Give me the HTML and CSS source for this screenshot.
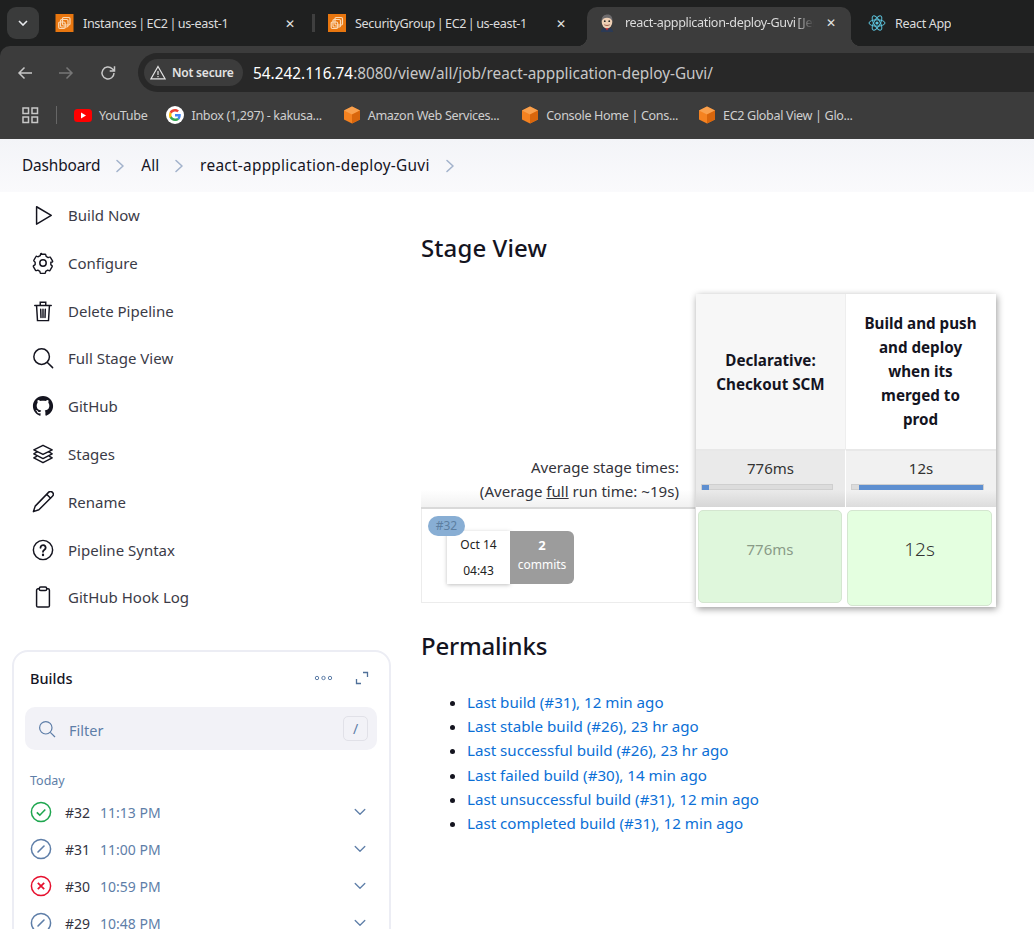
FILE: index.html
```html
<!DOCTYPE html>
<html lang="en">
<head>
  <meta charset="UTF-8">
  <title>react-appplication-deploy-Guvi [Jenkins]</title>
  <link rel="stylesheet" href="styles.css">
</head>
<body>
  <svg class="defs" width="0" height="0">
    <symbol id="ec2" viewBox="0 0 18 18">
      <rect width="18" height="18" fill="#e8760f"/>
      <g fill="none" stroke="#fbd9b4" stroke-width="1.2">
        <rect x="7" y="3.5" width="7.5" height="7.5" rx="1.2"/>
        <rect x="5" y="5.5" width="7.5" height="7.5" rx="1.2"/>
        <rect x="3.2" y="8" width="6.5" height="6.5" rx="1.2"/>
      </g>
    </symbol>
    <symbol id="cube" viewBox="0 0 18 18">
      <path d="M9 0.5 17 4.5V13.5L9 17.5 1 13.5V4.5Z" fill="#f58220"/>
      <path d="M9 0.5 17 4.5 9 8.5 1 4.5Z" fill="#f9a04d"/>
      <path d="M9 8.5 17 4.5V13.5L9 17.5Z" fill="#d9660c"/>
    </symbol>
    <symbol id="chev" viewBox="0 0 10 14">
      <path d="M2 1.5 8 7 2 12.5" fill="none" stroke="#a3b3cc" stroke-width="1.6" stroke-linecap="round" stroke-linejoin="round"/>
    </symbol>
    <symbol id="down" viewBox="0 0 12 8">
      <path d="M1.2 1.5 6 6.2 10.8 1.5" fill="none" stroke="#5e7ea8" stroke-width="1.3" stroke-linecap="round" stroke-linejoin="round"/>
    </symbol>
    <symbol id="aborted" viewBox="0 0 22 22">
      <circle cx="11" cy="11" r="9.6" fill="none" stroke="#5e7ea8" stroke-width="1.5"/>
      <path d="M8 14 14 8" fill="none" stroke="#5e7ea8" stroke-width="1.6" stroke-linecap="round"/>
    </symbol>
  </svg>

  <div class="tabstrip">
    <div class="tab-search">
      <svg width="10" height="6" viewBox="0 0 10 6"><path d="M1 1 5 5 9 1" fill="none" stroke="#e8eaed" stroke-width="1.6"/></svg>
    </div>
    <div class="tab tab-first">
      <svg class="favicon" width="19" height="18"><use href="#ec2"/></svg>
      <span class="tab-title">Instances | EC2 | us-east-1</span>
      <span class="tab-close">✕</span>
    </div>
    <i class="tab-sep"></i>
    <div class="tab tab-second">
      <svg class="favicon" width="18" height="18"><use href="#ec2"/></svg>
      <span class="tab-title">SecurityGroup | EC2 | us-east-1</span>
      <span class="tab-close">✕</span>
    </div>
    <div class="tab tab-active">
      <svg class="favicon" width="16" height="18" viewBox="0 0 18 20">
        <path d="M2 20c1-4 3-5 7-5s6 1 7 5Z" fill="#2b3a55"/>
        <path d="M7 15.500h4l-2 3Z" fill="#c2272d"/>
        <ellipse cx="9" cy="8.500" rx="6" ry="7.500" fill="#eecfb4"/>
        <path d="M3 8C2.500 2 7 .5 10 .5S15.500 3 15 8C14 5 12 4 9 4S4 5 3 8Z" fill="#6d6b6d"/>
        <circle cx="6.500" cy="8" r="1" fill="#222"/>
        <circle cx="11.500" cy="8" r="1" fill="#222"/>
        <path d="M6 12c2 1 4 1 6 0" stroke="#8c4a3a" fill="none"/>
      </svg>
      <span class="tab-title tab-fade">react-appplication-deploy-Guvi [Jenkins]</span>
      <span class="tab-close">✕</span>
    </div>
    <div class="tab tab-last">
      <svg class="favicon" width="18" height="18" viewBox="0 0 18 18">
        <g fill="none" stroke="#5cc4dd" stroke-width="1">
          <ellipse cx="9" cy="9" rx="8" ry="3.200"/>
          <ellipse cx="9" cy="9" rx="8" ry="3.200" transform="rotate(60 9 9)"/>
          <ellipse cx="9" cy="9" rx="8" ry="3.200" transform="rotate(120 9 9)"/>
        </g>
        <circle cx="9" cy="9" r="1.600" fill="#5cc4dd"/>
      </svg>
      <span class="tab-title">React App</span>
    </div>
  </div>

  <div class="toolbar">
    <svg class="nav-back" width="16" height="14" viewBox="0 0 16 14"><path d="M15 7H2M7.500 1.500 2 7l5.500 5.500" fill="none" stroke="#c7c7c7" stroke-width="1.500"/></svg>
    <svg class="nav-forward" width="16" height="14" viewBox="0 0 16 14"><path d="M1 7h13M8.500 1.500 14 7l-5.500 5.500" fill="none" stroke="#777" stroke-width="1.500"/></svg>
    <svg class="nav-reload" width="16" height="16" viewBox="0 0 16 16"><path d="M14 8a6 6 0 1 1-1.800-4.300L14.300 5.800M14.500 1.200V6H9.700" fill="none" stroke="#c7c7c7" stroke-width="1.500"/></svg>
    <div class="omnibox">
      <div class="chip">
        <svg width="16" height="15" viewBox="0 0 16 15"><path d="M8 1.500 15 13.800H1ZM8 6v4M8 11v1.200" fill="none" stroke="#e3e3e3" stroke-width="1.200"/></svg>
        <span>Not secure</span>
      </div>
      <span class="url"><b>54.242.116.74</b>:8080/view/all/job/react-appplication-deploy-Guvi/</span>
    </div>
  </div>

  <div class="bookmarks">
    <svg class="apps" width="17" height="17" viewBox="0 0 17 17"><g fill="none" stroke="#c7c7c7" stroke-width="1.500"><rect x="1" y="1" width="5.500" height="5.500"/><rect x="10" y="1" width="5.500" height="5.500"/><rect x="1" y="10" width="5.500" height="5.500"/><rect x="10" y="10" width="5.500" height="5.500"/></g></svg>
    <i class="bm-sep"></i>
    <div class="bm bm-yt">
      <svg width="18" height="13" viewBox="0 0 18 13"><rect width="18" height="13" rx="3.500" fill="#f00"/><path d="M7 3.500 12 6.500 7 9.500Z" fill="#fff"/></svg>
      <span>YouTube</span>
    </div>
    <div class="bm bm-inbox">
      <svg width="18" height="18" viewBox="0 0 18 18">
        <circle cx="9" cy="9" r="9" fill="#fff"/>
        <path d="M14.800 9.200c0-.5 0-.9-.1-1.300H9v2.500h3.300c-.2.800-.6 1.400-1.200 1.800l1.900 1.500c1.100-1 1.800-2.600 1.800-4.500Z" fill="#4285f4"/>
        <path d="M9 15c1.600 0 3-.5 4-1.500l-1.900-1.500c-.5.400-1.200.6-2.100.6-1.600 0-2.900-1-3.400-2.500l-2 1.500C4.600 13.700 6.600 15 9 15Z" fill="#34a853"/>
        <path d="M5.600 10.600c-.3-1-.3-2.100 0-3.100l-2-1.500c-.8 1.600-.8 4.500 0 6.100Z" fill="#fbbc05"/>
        <path d="M9 5.400c.9 0 1.700.3 2.300.9l1.700-1.700C12 3.600 10.600 3 9 3 6.600 3 4.600 4.300 3.600 6l2 1.500C6.100 6.400 7.400 5.400 9 5.400Z" fill="#ea4335"/>
      </svg>
      <span>Inbox (1,297) - kakusa...</span>
    </div>
    <div class="bm bm-aws">
      <svg width="18" height="18"><use href="#cube"/></svg>
      <span>Amazon Web Services...</span>
    </div>
    <div class="bm bm-console">
      <svg width="18" height="18"><use href="#cube"/></svg>
      <span>Console Home | Cons...</span>
    </div>
    <div class="bm">
      <svg width="18" height="18"><use href="#cube"/></svg>
      <span>EC2 Global View | Glo...</span>
    </div>
  </div>

  <div class="breadcrumbs">
    <span class="crumb crumb-home">Dashboard</span>
    <svg class="crumb-chev" width="10" height="14"><use href="#chev"/></svg>
    <span class="crumb">All</span>
    <svg class="crumb-chev" width="10" height="14"><use href="#chev"/></svg>
    <span class="crumb crumb-job">react-appplication-deploy-Guvi</span>
    <svg class="crumb-chev" width="10" height="14"><use href="#chev"/></svg>
  </div>

  <div class="page">
    <aside class="sidebar">
      <ul class="tasks">
        <li>
          <svg viewBox="0 0 24 24"><path d="M5 3 21 12.500 5 22Z" stroke-linejoin="round"/></svg>
          <span>Build Now</span>
        </li>
        <li>
          <svg viewBox="0 0 24 24"><circle cx="12" cy="12" r="3.500"/><path d="M9.800 2h4.400c.6 0 1 .4 1.100.9l.3 1.600 2.300 1.300 1.500-.5c.5-.2 1.100 0 1.300.5l2.200 3.800c.3.500.2 1-.2 1.400L21 11.100v2.800l1.200 1.100c.4.400.5.900.2 1.400l-2.200 3.800c-.2.500-.8.700-1.300.5l-1.500-.5-2.300 1.300-.3 1.600c-.1.500-.5.900-1.100.9H9.800c-.6 0-1-.4-1.100-.9l-.3-1.600-2.300-1.300-1.500.5c-.5.200-1.100 0-1.300-.5l-2.200-3.800c-.3-.5-.2-1 .2-1.400L3 13.900v-2.800L1.800 10c-.4-.4-.5-.9-.2-1.400l2.200-3.800c.2-.5.800-.7 1.300-.5l1.500.5 2.300-1.300.3-1.600c.1-.5.500-.9 1.100-.9Z" transform="translate(.6 .6) scale(.95)" stroke-linejoin="round"/></svg>
          <span>Configure</span>
        </li>
        <li>
          <svg viewBox="0 0 24 24"><path d="M5 6.500 6 22.500h12l1-16M3 6h18M9 6V2.500h6V6M9.500 10l.3 9M14.500 10l-.3 9M12 10v9"/></svg>
          <span>Delete Pipeline</span>
        </li>
        <li>
          <svg viewBox="0 0 24 24"><circle cx="10.500" cy="10.500" r="8.500"/><path d="M16.800 16.800 22.500 22.500"/></svg>
          <span>Full Stage View</span>
        </li>
        <li>
          <svg viewBox="0 0 24 24"><path class="solid" d="M12 1C5.900 1 1 5.900 1 12.100c0 4.900 3.200 9 7.500 10.500.5.100.8-.2.800-.6v-2c-3.100.7-3.700-1.400-3.700-1.400-.5-1.300-1.200-1.600-1.200-1.600-1-.7.100-.7.100-.7 1.100.1 1.700 1.100 1.700 1.100 1 1.700 2.600 1.200 3.200.9.100-.7.400-1.200.7-1.500-2.400-.3-5-1.200-5-5.400 0-1.200.4-2.200 1.100-3-.1-.3-.5-1.400.1-2.900 0 0 .9-.3 3 1.100.9-.2 1.800-.4 2.700-.4s1.900.1 2.700.4c2.100-1.400 3-1.100 3-1.100.6 1.500.2 2.600.1 2.900.7.800 1.100 1.800 1.100 3 0 4.200-2.600 5.100-5 5.400.4.300.7 1 .7 2v3.100c0 .3.200.7.800.6C19.800 21.100 23 17 23 12.100 23 5.900 18.100 1 12 1Z"/></svg>
          <span>GitHub</span>
        </li>
        <li>
          <svg viewBox="0 0 24 24"><path d="M12 2.500 22 7.500 12 12.500 2 7.500ZM5 10 2 11.800 12 17 22 11.800 19 10M5 14.500 2 16.300 12 21.500 22 16.300 19 14.500" stroke-linejoin="round"/></svg>
          <span>Stages</span>
        </li>
        <li>
          <svg viewBox="0 0 24 24"><path d="M18 1.500a3 3 0 0 1 4.300 4.300L7.500 20.500 1.500 22.500l2-6ZM16 3.500l4.300 4.300" stroke-linejoin="round"/></svg>
          <span>Rename</span>
        </li>
        <li>
          <svg viewBox="0 0 24 24"><circle cx="12" cy="12" r="10.500"/><path d="M9.300 9.500a2.800 2.800 0 1 1 4.300 2.300c-.9.600-1.600 1.100-1.600 2.200" stroke-width="2"/><path d="M12 17v.6" stroke-width="2.400"/></svg>
          <span>Pipeline Syntax</span>
        </li>
        <li>
          <svg viewBox="0 0 24 24"><path d="M8 3H6.500A1.500 1.500 0 0 0 5 4.500v17A1.500 1.500 0 0 0 6.500 23h11a1.500 1.500 0 0 0 1.500-1.500v-17A1.500 1.500 0 0 0 17.500 3H16"/><rect x="8" y="1" width="8" height="4" rx="1.500"/></svg>
          <span>GitHub Hook Log</span>
        </li>
      </ul>

      <section class="builds">
        <div class="builds-head">
          <h2>Builds</h2>
          <svg class="dots" width="19" height="6" viewBox="0 0 19 6"><g fill="none" stroke="#5e7ea8" stroke-width="1"><circle cx="3" cy="3" r="1.700"/><circle cx="9.500" cy="3" r="1.700"/><circle cx="16" cy="3" r="1.700"/></g></svg>
          <svg class="expand" width="14" height="14" viewBox="0 0 14 14"><path d="M8 1.500h4.500V6M6 12.500H1.500V8" fill="none" stroke="#4f7099" stroke-width="1.300"/></svg>
        </div>
        <div class="filter">
          <svg width="18" height="18" viewBox="0 0 18 18"><circle cx="7.800" cy="7.800" r="6.200" fill="none" stroke="#5e7ea8" stroke-width="1.200"/><path d="M12.300 12.300 17 17" stroke="#5e7ea8" stroke-width="1.200"/></svg>
          <span class="filter-label">Filter</span>
          <span class="key">/</span>
        </div>
        <div class="day">Today</div>
        <div class="build-row">
          <svg width="22" height="22" viewBox="0 0 22 22"><circle cx="11" cy="11" r="9.600" fill="none" stroke="#1ea64f" stroke-width="1.500"/><path d="M6.800 11.300 9.800 14.200 15.300 8.500" fill="none" stroke="#1ea64f" stroke-width="1.600"/></svg>
          <span class="build-no">#32</span><span class="build-time">11:13 PM</span>
          <svg class="build-more" width="12" height="8"><use href="#down"/></svg>
        </div>
        <div class="build-row">
          <svg width="22" height="22"><use href="#aborted"/></svg>
          <span class="build-no">#31</span><span class="build-time">11:00 PM</span>
          <svg class="build-more" width="12" height="8"><use href="#down"/></svg>
        </div>
        <div class="build-row">
          <svg width="22" height="22" viewBox="0 0 22 22"><circle cx="11" cy="11" r="9.600" fill="none" stroke="#e6102e" stroke-width="1.500"/><path d="M7.800 7.800 14.200 14.200M14.200 7.800 7.800 14.200" stroke="#e6102e" stroke-width="1.700"/></svg>
          <span class="build-no">#30</span><span class="build-time">10:59 PM</span>
          <svg class="build-more" width="12" height="8"><use href="#down"/></svg>
        </div>
        <div class="build-row">
          <svg width="22" height="22"><use href="#aborted"/></svg>
          <span class="build-no">#29</span><span class="build-time">10:48 PM</span>
          <svg class="build-more" width="12" height="8"><use href="#down"/></svg>
        </div>
      </section>
    </aside>

    <main class="content">
      <h1 class="stage-title">Stage View</h1>
      <div class="stage-view">
        <div class="stage-left">
          <div class="avg-label">
            <div>Average stage times:</div>
            <div>(Average <u>full</u> run time: ~19s)</div>
          </div>
          <div class="run-row">
            <span class="run-badge">#32</span>
            <div class="run-date"><div>Oct 14</div><div>04:43</div></div>
            <div class="run-commits"><b>2</b><span>commits</span></div>
          </div>
        </div>
        <div class="stage-table">
          <div class="stage-head head-alt">Declarative:<br>Checkout SCM</div>
          <div class="stage-head">Build and push<br>and deploy<br>when its<br>merged to<br>prod</div>
          <div class="stage-avg avg-alt">
            <span>776ms</span>
            <div class="bar"><i class="bar-fill fill-small"></i></div>
          </div>
          <div class="stage-avg">
            <span>12s</span>
            <div class="bar"><i class="bar-fill fill-large"></i></div>
          </div>
          <div class="stage-cell cell-alt"><div class="cell-box">776ms</div></div>
          <div class="stage-cell"><div class="cell-box">12s</div></div>
        </div>
      </div>

      <h1 class="permalinks-title">Permalinks</h1>
      <ul class="permalinks">
        <li><a href="#">Last build (#31), 12 min ago</a></li>
        <li><a href="#">Last stable build (#26), 23 hr ago</a></li>
        <li><a href="#">Last successful build (#26), 23 hr ago</a></li>
        <li><a href="#">Last failed build (#30), 14 min ago</a></li>
        <li><a href="#">Last unsuccessful build (#31), 12 min ago</a></li>
        <li><a href="#">Last completed build (#31), 12 min ago</a></li>
      </ul>
    </main>
  </div>
</body>
</html>
```

FILE: styles.css
```css
html, body {
  margin: 0;
  height: 929px;
  overflow: hidden;
}
body {
  display: flex;
  flex-direction: column;
  background: #1f2020;
  font-family: "Noto Sans", "Open Sans", sans-serif;
  color: #14141f;
}
.defs {
  position: absolute;
}

/* browser chrome */
.tabstrip {
  height: 46px;
  flex: none;
  display: flex;
  align-items: center;
  color: #dcdcdc;
  font-size: 12.600px;
}
.tab-search {
  width: 32px;
  height: 32px;
  margin-left: 7px;
  border-radius: 9px;
  background: #3a3b3b;
  display: flex;
  align-items: center;
  justify-content: center;
}
.tab {
  display: flex;
  align-items: center;
  height: 46px;
}
.tab-first {
  width: 250px;
  padding-left: 16px;
}
.tab-first .tab-close {
  margin-right: 8px;
}
.tab-second {
  width: 259px;
  padding-left: 13px;
}
.tab-second .tab-close {
  margin-right: 19px;
}
.tab-sep {
  width: 3px;
  height: 18px;
  margin-left: 7px;
  background: #3f3f3f;
}
.favicon {
  flex: none;
  margin-right: 9px;
}
.tab-title {
  flex: 1;
  white-space: nowrap;
  overflow: hidden;
  letter-spacing: -.35px;
  word-spacing: -1.200px;
}
.tab-close {
  width: 12px;
  font-size: 12px;
  color: #e3e3e3;
}
.tab-active {
  position: relative;
  width: 264px;
  height: 39px;
  margin-top: 7px;
  padding: 0 0 8px 12px;
  box-sizing: border-box;
  border-radius: 10px 10px 0 0;
  background: #3c3c3c;
}
.tab-active::before,
.tab-active::after {
  content: "";
  position: absolute;
  bottom: 0;
  width: 10px;
  height: 10px;
}
.tab-active::before {
  left: -10px;
  background: radial-gradient(circle at 0 0, transparent 10px, #3c3c3c 10.500px);
}
.tab-active::after {
  right: -10px;
  background: radial-gradient(circle at 100% 0, transparent 10px, #3c3c3c 10.500px);
}
.tab-active .favicon {
  margin-right: 10px;
}
.tab-fade {
  margin-right: 12px;
  -webkit-mask-image: linear-gradient(to right, #000 90%, transparent);
  mask-image: linear-gradient(to right, #000 90%, transparent);
}
.tab-active .tab-close {
  margin-right: 13px;
}
.tab-last {
  padding-left: 17px;
}
.tab-last .tab-title {
  word-spacing: 0;
}
.toolbar {
  height: 46px;
  flex: none;
  display: flex;
  align-items: flex-end;
  background: #3c3c3c;
  border-radius: 10px 0 0 0;
}
.toolbar > svg {
  flex: none;
  align-self: center;
  margin-top: 7px;
}
.nav-back {
  margin-left: 17px;
}
.nav-forward {
  margin-left: 25px;
}
.nav-reload {
  margin-left: 26px;
}
.omnibox {
  flex: 1;
  height: 39px;
  margin-left: 22px;
  display: flex;
  align-items: center;
  border-radius: 20px 0 0 20px;
  background: #282828;
}
.chip {
  display: flex;
  align-items: center;
  gap: 6px;
  height: 27px;
  margin-left: 6px;
  padding: 0 9px 0 6px;
  border-radius: 14px;
  background: #3c3c3c;
  color: #e3e3e3;
  font-size: 12px;
  font-weight: 600;
  letter-spacing: -.2px;
}
.url {
  margin-left: 10.500px;
  font-size: 15.350px;
  color: #c7c7c7;
  white-space: nowrap;
}
.url b {
  font-weight: 400;
  color: #fff;
}
.bookmarks {
  height: 47px;
  flex: none;
  box-sizing: border-box;
  padding-bottom: 1px;
  display: flex;
  align-items: center;
  background: #3c3c3c;
  color: #cfcfcf;
  font-size: 12.600px;
  letter-spacing: -.35px;
}
.apps {
  margin-left: 22px;
}
.bm-sep {
  width: 1px;
  height: 18px;
  margin: 0 17px;
  background: #666;
}
.bm {
  display: flex;
  align-items: center;
  gap: 7px;
  white-space: nowrap;
}
.bm-yt {
  margin-right: 19px;
}
.bm-inbox {
  margin-right: 21px;
}
.bm-aws {
  margin-right: 22px;
}
.bm-console {
  margin-right: 20px;
}

/* jenkins header */
.breadcrumbs {
  height: 53px;
  flex: none;
  display: flex;
  align-items: center;
  padding-left: 22px;
  background: linear-gradient(#f3f4f8, #fafafc);
  font-size: 15.400px;
  font-weight: 450;
}
.crumb-home {
  letter-spacing: -.15px;
}
.crumb-job {
  letter-spacing: .27px;
}
.crumb-chev {
  margin: 0 16px 0 15px;
}

.page {
  flex: 1;
  min-height: 0;
  display: flex;
  background: #fff;
}
.sidebar {
  width: 391px;
  flex: none;
  padding-left: 12px;
  box-sizing: border-box;
}
.tasks {
  list-style: none;
  margin: -.9px 0 0;
  padding: 0 0 0 20px;
}
.tasks li {
  height: 47.800px;
  display: flex;
  align-items: center;
  gap: 14px;
  font-size: 15px;
  color: #3b3b47;
}
.tasks svg {
  width: 22px;
  height: 22px;
  fill: none;
  stroke: #14141f;
  stroke-width: 1.600;
  stroke-linecap: round;
}
.tasks .solid {
  fill: #14141f;
  stroke: none;
}

.builds {
  margin-top: 28.900px;
  height: 400px;
  box-sizing: border-box;
  padding: 14px 12px 0 11px;
  border: 2px solid #ecedf4;
  border-radius: 16px;
}
.builds-head {
  display: flex;
  align-items: center;
  height: 24px;
  padding-left: 5px;
}
.builds-head h2 {
  flex: 1;
  margin: 0;
  font-size: 14.500px;
  font-weight: 500;
}
.dots {
  margin-right: 22px;
}
.expand {
  margin-right: 8px;
}
.filter {
  height: 43px;
  margin-top: 17px;
  display: flex;
  align-items: center;
  padding: 0 9px 0 13px;
  background: #f2f2f7;
  border-radius: 10px;
  color: #5e7ea8;
  font-size: 14.500px;
}
.filter-label {
  flex: 1;
  margin-left: 13px;
  padding-top: 2px;
}
.key {
  width: 25px;
  height: 25px;
  line-height: 23px;
  box-sizing: border-box;
  text-align: center;
  border: 1px solid #e1e1e8;
  border-radius: 5px;
  font-size: 14px;
}
.day {
  margin-top: 22px;
  padding-left: 5px;
  height: 21px;
  color: #5e7ea8;
  font-size: 12.500px;
}
.build-row {
  display: flex;
  align-items: center;
  height: 37px;
  padding-left: 5px;
  font-size: 14px;
}
.build-no,
.build-time {
  padding-top: 2px;
}
.build-no {
  margin-left: 13px;
  color: #33333f;
}
.build-time {
  flex: 1;
  margin-left: 10px;
  color: #5e7ea8;
}
.build-more {
  margin-right: 11px;
}

/* main area */
.content {
  flex: 1;
  min-width: 0;
  padding-left: 30px;
}
.content h1 {
  margin: 0;
  font-size: 24px;
  line-height: 32px;
  font-weight: 500;
}
.stage-title {
  padding-top: 40px;
  letter-spacing: .1px;
}
.stage-view {
  display: flex;
  margin-top: 30px;
}
.stage-left {
  width: 274px;
  flex: none;
  padding-top: 155px;
  font-size: 15.100px;
  color: #33333a;
}
.avg-label {
  height: 60px;
  padding: 6px 16px 0 0;
  box-sizing: border-box;
  text-align: right;
  line-height: 24px;
  background: linear-gradient(#fff 70%, #f1f1f1);
  border-bottom: 2px solid #d9d9d9;
}
.run-row {
  position: relative;
  height: 94px;
  box-sizing: border-box;
  display: flex;
  align-items: flex-start;
  padding: 22px 0 0 25px;
  border: 1px solid #ececec;
  border-top: 0;
  border-right: 0;
}
.run-badge {
  position: absolute;
  left: 6px;
  top: 7px;
  width: 37px;
  height: 20px;
  border-radius: 10px;
  background: #88aed4;
  color: #5c7ea1;
  font-size: 12px;
  line-height: 20px;
  text-align: center;
}
.run-date {
  width: 63px;
  height: 53px;
  padding-top: 1px;
  box-sizing: border-box;
  text-align: center;
  font-size: 12px;
  line-height: 26px;
  color: #222;
  box-shadow: 0 1px 4px rgba(0, 0, 0, .25);
}
.run-commits {
  width: 64px;
  height: 53px;
  display: flex;
  flex-direction: column;
  align-items: center;
  padding-top: 4px;
  box-sizing: border-box;
  border-radius: 0 6px 6px 0;
  background: #9c9c9c;
  color: #fff;
  font-size: 12px;
  line-height: 20px;
}
.run-commits b {
  font-size: 13px;
}
.stage-table {
  width: 300px;
  height: 313px;
  flex: none;
  margin-left: 1px;
  display: grid;
  grid-template-columns: 149px 151px;
  grid-template-rows: 155px 58px 100px;
  box-shadow: 1px 2px 7px rgba(0, 0, 0, .4);
  background: #fff;
}
.stage-head {
  display: flex;
  align-items: center;
  justify-content: center;
  padding: 0 1px 2px 0;
  text-align: center;
  font-size: 15.200px;
  line-height: 24px;
  font-weight: 700;
  border-left: 1px solid #eee;
}
.head-alt {
  background: #f7f7f7;
  border-left: 0;
  padding: 0;
}
.stage-avg {
  padding-top: 6px;
  box-sizing: border-box;
  text-align: center;
  font-size: 15px;
  line-height: 22px;
  color: #333;
  background: linear-gradient(#f1f1f1 70%, #dcdcdc);
  border-top: 2px solid #e8e8e8;
  border-left: 1px solid #fff;
}
.avg-alt {
  background: linear-gradient(#eaeaea 70%, #d6d6d6);
  border-left: 0;
}
.bar {
  height: 4px;
  margin: 5px 12px 0 5px;
  background: #dcdcdc;
  border: 1px solid #cfcfcf;
  text-align: left;
  line-height: 0;
}
.bar-fill {
  display: block;
  height: 5px;
  background: #5e8fd0;
}
.fill-small {
  width: 7px;
}
.fill-large {
  width: 124px;
  margin-left: 7px;
}
.stage-cell {
  padding: 3px 4px 0 1px;
  box-sizing: border-box;
  border-left: 1px solid #fff;
}
.cell-alt {
  border-left: 0;
  padding: 3px 3px 0 2px;
}
.cell-box {
  height: 96px;
  display: flex;
  align-items: center;
  justify-content: center;
  padding-bottom: 18px;
  box-sizing: border-box;
  border: 1px solid #d4e6d0;
  border-radius: 5px;
  background: #e4ffe0;
  font-size: 19px;
  font-weight: 300;
  color: #333;
}
.cell-alt .cell-box {
  height: 93px;
  padding-bottom: 16px;
  background: #dff7dc;
  font-size: 15px;
  font-weight: 400;
  color: #8a9b88;
}
.permalinks-title {
  padding-top: 23px;
  letter-spacing: -.2px;
}
.permalinks {
  margin: 28px 0 0;
  padding-left: 46px;
  font-size: 15.150px;
  line-height: 24.200px;
}
.permalinks a {
  color: #0b6fd6;
  text-decoration: none;
}
```
